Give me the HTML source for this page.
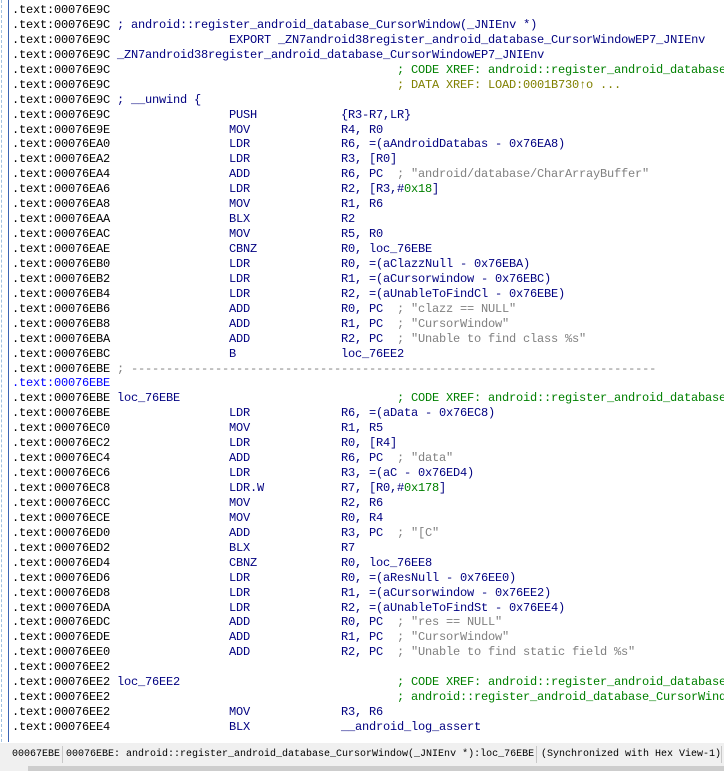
<!DOCTYPE html>
<html><head><meta charset="utf-8"><style>
body{margin:0;width:724px;height:771px;background:#fff;overflow:hidden;position:relative;font-family:"Liberation Mono",monospace;font-size:12px;letter-spacing:-0.2px;}
#v{position:absolute;left:0;top:3px;width:724px;}
.l{position:relative;height:14.94px;line-height:14.94px;white-space:pre;color:#000;}
.l span{position:absolute;top:0;white-space:pre;}
.A{left:12px;color:#000}
.L{left:117px;color:#000080}
.M{left:229px;color:#000080}
.O{left:341px;color:#000080}
.C{left:397px}
.g{color:#808080}
.x{color:#008000}
.o{color:#808000}
.gr{color:#008000}
.hl{color:#0000ff}
i{font-style:normal}
#bl{position:absolute;left:8px;top:0;width:1px;height:742px;background:#3c64b4}
#dl{position:absolute;left:1px;top:0;width:1px;height:742px;border-left:1px dashed #a0c0e0}
#sb{position:absolute;left:0;top:743px;width:724px;height:23px;background:#f0f0f0;font-family:"Liberation Mono",monospace;font-size:10px;letter-spacing:0;line-height:23px;white-space:pre;color:#000}
#sb span{position:absolute;top:0}
.sep{position:absolute;top:3px;width:1px;height:17px;background:#c8c8c8}
#hs{position:absolute;left:0;top:766px;width:724px;height:5px;background:#f0f0f0}
#hs div{position:absolute;left:28px;top:0;width:696px;height:5px;background:#cdcdcd}
</style></head><body>
<div id="dl"></div><div id="bl"></div>
<div id="v">
<div class="l"><span class="A">.text:00076E9C</span></div>
<div class="l"><span class="A">.text:00076E9C</span><span class="L">; android::register_android_database_CursorWindow(_JNIEnv *)</span></div>
<div class="l"><span class="A">.text:00076E9C</span><span class="M">EXPORT _ZN7android38register_android_database_CursorWindowEP7_JNIEnv</span></div>
<div class="l"><span class="A">.text:00076E9C</span><span class="L">_ZN7android38register_android_database_CursorWindowEP7_JNIEnv</span></div>
<div class="l"><span class="A">.text:00076E9C</span><span class="C x">; CODE XREF: android::register_android_database</span></div>
<div class="l"><span class="A">.text:00076E9C</span><span class="C o">; DATA XREF: LOAD:0001B730↑o ...</span></div>
<div class="l"><span class="A">.text:00076E9C</span><span class="L">; __unwind {</span></div>
<div class="l"><span class="A">.text:00076E9C</span><span class="M">PUSH</span><span class="O">{R3-R7,LR}</span></div>
<div class="l"><span class="A">.text:00076E9E</span><span class="M">MOV</span><span class="O">R4, R0</span></div>
<div class="l"><span class="A">.text:00076EA0</span><span class="M">LDR</span><span class="O">R6, =(aAndroidDatabas - 0x76EA8)</span></div>
<div class="l"><span class="A">.text:00076EA2</span><span class="M">LDR</span><span class="O">R3, [R0]</span></div>
<div class="l"><span class="A">.text:00076EA4</span><span class="M">ADD</span><span class="O">R6, PC  <i class="g">; "android/database/CharArrayBuffer"</i></span></div>
<div class="l"><span class="A">.text:00076EA6</span><span class="M">LDR</span><span class="O">R2, [R3,#<i class="gr">0x18</i>]</span></div>
<div class="l"><span class="A">.text:00076EA8</span><span class="M">MOV</span><span class="O">R1, R6</span></div>
<div class="l"><span class="A">.text:00076EAA</span><span class="M">BLX</span><span class="O">R2</span></div>
<div class="l"><span class="A">.text:00076EAC</span><span class="M">MOV</span><span class="O">R5, R0</span></div>
<div class="l"><span class="A">.text:00076EAE</span><span class="M">CBNZ</span><span class="O">R0, loc_76EBE</span></div>
<div class="l"><span class="A">.text:00076EB0</span><span class="M">LDR</span><span class="O">R0, =(aClazzNull - 0x76EBA)</span></div>
<div class="l"><span class="A">.text:00076EB2</span><span class="M">LDR</span><span class="O">R1, =(aCursorwindow - 0x76EBC)</span></div>
<div class="l"><span class="A">.text:00076EB4</span><span class="M">LDR</span><span class="O">R2, =(aUnableToFindCl - 0x76EBE)</span></div>
<div class="l"><span class="A">.text:00076EB6</span><span class="M">ADD</span><span class="O">R0, PC  <i class="g">; "clazz == NULL"</i></span></div>
<div class="l"><span class="A">.text:00076EB8</span><span class="M">ADD</span><span class="O">R1, PC  <i class="g">; "CursorWindow"</i></span></div>
<div class="l"><span class="A">.text:00076EBA</span><span class="M">ADD</span><span class="O">R2, PC  <i class="g">; "Unable to find class %s"</i></span></div>
<div class="l"><span class="A">.text:00076EBC</span><span class="M">B</span><span class="O">loc_76EE2</span></div>
<div class="l"><span class="A">.text:00076EBE</span><span class="L g">; ---------------------------------------------------------------------------</span></div>
<div class="l"><span class="A hl">.text:00076EBE</span></div>
<div class="l"><span class="A">.text:00076EBE</span><span class="L">loc_76EBE</span><span class="C x">; CODE XREF: android::register_android_database</span></div>
<div class="l"><span class="A">.text:00076EBE</span><span class="M">LDR</span><span class="O">R6, =(aData - 0x76EC8)</span></div>
<div class="l"><span class="A">.text:00076EC0</span><span class="M">MOV</span><span class="O">R1, R5</span></div>
<div class="l"><span class="A">.text:00076EC2</span><span class="M">LDR</span><span class="O">R0, [R4]</span></div>
<div class="l"><span class="A">.text:00076EC4</span><span class="M">ADD</span><span class="O">R6, PC  <i class="g">; "data"</i></span></div>
<div class="l"><span class="A">.text:00076EC6</span><span class="M">LDR</span><span class="O">R3, =(aC - 0x76ED4)</span></div>
<div class="l"><span class="A">.text:00076EC8</span><span class="M">LDR.W</span><span class="O">R7, [R0,#<i class="gr">0x178</i>]</span></div>
<div class="l"><span class="A">.text:00076ECC</span><span class="M">MOV</span><span class="O">R2, R6</span></div>
<div class="l"><span class="A">.text:00076ECE</span><span class="M">MOV</span><span class="O">R0, R4</span></div>
<div class="l"><span class="A">.text:00076ED0</span><span class="M">ADD</span><span class="O">R3, PC  <i class="g">; "[C"</i></span></div>
<div class="l"><span class="A">.text:00076ED2</span><span class="M">BLX</span><span class="O">R7</span></div>
<div class="l"><span class="A">.text:00076ED4</span><span class="M">CBNZ</span><span class="O">R0, loc_76EE8</span></div>
<div class="l"><span class="A">.text:00076ED6</span><span class="M">LDR</span><span class="O">R0, =(aResNull - 0x76EE0)</span></div>
<div class="l"><span class="A">.text:00076ED8</span><span class="M">LDR</span><span class="O">R1, =(aCursorwindow - 0x76EE2)</span></div>
<div class="l"><span class="A">.text:00076EDA</span><span class="M">LDR</span><span class="O">R2, =(aUnableToFindSt - 0x76EE4)</span></div>
<div class="l"><span class="A">.text:00076EDC</span><span class="M">ADD</span><span class="O">R0, PC  <i class="g">; "res == NULL"</i></span></div>
<div class="l"><span class="A">.text:00076EDE</span><span class="M">ADD</span><span class="O">R1, PC  <i class="g">; "CursorWindow"</i></span></div>
<div class="l"><span class="A">.text:00076EE0</span><span class="M">ADD</span><span class="O">R2, PC  <i class="g">; "Unable to find static field %s"</i></span></div>
<div class="l"><span class="A">.text:00076EE2</span></div>
<div class="l"><span class="A">.text:00076EE2</span><span class="L">loc_76EE2</span><span class="C x">; CODE XREF: android::register_android_database</span></div>
<div class="l"><span class="A">.text:00076EE2</span><span class="C x">; android::register_android_database_CursorWind</span></div>
<div class="l"><span class="A">.text:00076EE2</span><span class="M">MOV</span><span class="O">R3, R6</span></div>
<div class="l"><span class="A">.text:00076EE4</span><span class="M">BLX</span><span class="O">__android_log_assert</span></div>
</div>
<div id="sb"><span style="left:12px">00067EBE</span><div class="sep" style="left:62px"></div><span style="left:66px">00076EBE: android::register_android_database_CursorWindow(_JNIEnv *):loc_76EBE</span><div class="sep" style="left:536px"></div><span style="left:541px">(Synchronized with Hex View-1)</span><div class="sep" style="left:721px"></div></div>
<div id="hs"><div></div></div>
</body></html>
